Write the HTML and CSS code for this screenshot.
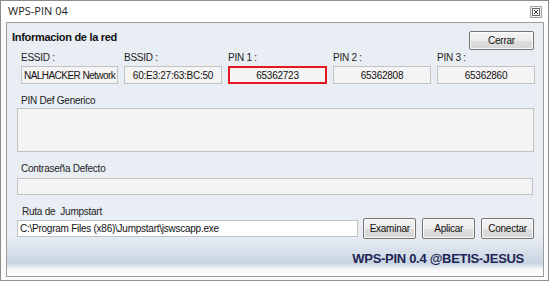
FILE: index.html
```html
<!DOCTYPE html>
<html lang="es">
<head>
    <meta charset="UTF-8">
    <link rel="stylesheet" href="styles.css">
    <title>WPS-PIN 04</title>
</head>
<body>
    <div class="ventana">
        <div class="titulo">
            <span class="tituloTexto">WPS-PIN 04</span>
            <span class="cerrarX">
                <svg width="8" height="8" viewBox="0 0 8 8">
                    <rect x="0.5" y="0.5" width="7" height="7" fill="none" stroke="#6a6a6a" stroke-width="1"/>
                    <path d="M2 2 L6 6 M6 2 L2 6" stroke="#4a4a4a" stroke-width="1"/>
                </svg>
            </span>
        </div>
        <div class="panel">
            <div class="cabecera">
                <h1>Informacion de la red</h1>
                <button class="boton cerrar">Cerrar</button>
            </div>

            <div class="campos">
                <div class="campo">
                    <label>ESSID :</label>
                    <div class="caja izq">NALHACKER Network</div>
                </div>
                <div class="campo">
                    <label>BSSID :</label>
                    <div class="caja">60:E3:27:63:BC:50</div>
                </div>
                <div class="campo">
                    <label>PIN 1 :</label>
                    <div class="caja marcada">65362723</div>
                </div>
                <div class="campo">
                    <label>PIN 2 :</label>
                    <div class="caja">65362808</div>
                </div>
                <div class="campo">
                    <label>PIN 3 :</label>
                    <div class="caja">65362860</div>
                </div>
            </div>

            <label class="etiqueta">PIN Def Generico</label>
            <div class="caja area"></div>

            <label class="etiqueta">Contraseña Defecto</label>
            <div class="caja larga"></div>

            <label class="etiqueta ruta">Ruta de &nbsp;Jumpstart</label>
            <div class="filaRuta">
                <div class="caja camino">C:\Program Files (x86)\Jumpstart\jswscapp.exe</div>
                <button class="boton">Examinar</button>
                <button class="boton">Aplicar</button>
                <button class="boton">Conectar</button>
            </div>

            <div class="firma">WPS-PIN 0.4 @BETIS-JESUS</div>
        </div>
    </div>
</body>
</html>
```

FILE: styles.css
```css
*{
    box-sizing: border-box;
}
body{
    margin: 0;
    background: #ffffff;
    font-family: "Liberation Sans", Arial, sans-serif;
    font-size: 10px;
    letter-spacing: -0.25px;
    color: #1a1a1a;
}

.ventana{
    width: 549px;
    height: 281px;
    border: 1px solid #8c8c8c;
    background: #fbfbfb;
    display: flex;
    flex-direction: column;
}
.titulo{
    height: 21px;
    display: flex;
    align-items: center;
    justify-content: space-between;
    padding: 0 6px 2px 7px;
    background: #ffffff;
}
.tituloTexto{
    font-family: "Open Sans", sans-serif;
    font-size: 11px;
    letter-spacing: 0;
    color: #222;
}
.cerrarX{
    width: 12px;
    height: 12px;
    border: 1px solid #a0a0a0;
    background: #f4f4f4;
    display: flex;
    align-items: center;
    justify-content: center;
    margin-top: 3px;
}

.panel{
    margin: 0 4px 0 5px;
    height: 255px;
    border: 1px solid #9c9c9c;
    padding: 0 9px 0 5px;
    display: flex;
    flex-direction: column;
    background: linear-gradient(to bottom, #e9eef4 0%, #e9eef4 84%, #cad5e3 95%, #f6f8fa 97.5%, #ffffff 100%);
}

.cabecera{
    display: flex;
    justify-content: space-between;
    align-items: flex-start;
    margin-top: 8px;
}
h1{
    margin: 0;
    font-size: 11px;
    line-height: 13px;
    letter-spacing: -0.3px;
    font-weight: bold;
    color: #111;
}

.boton{
    font-family: "Liberation Sans", Arial, sans-serif;
    font-size: 10px;
    letter-spacing: -0.25px;
    color: #111;
    height: 21px;
    width: 53px;
    padding: 0;
    border: 1px solid #747474;
    border-radius: 2px;
    background: linear-gradient(to bottom, #f4f4f4 0%, #ececec 50%, #dedede 51%, #d6d6d6 100%);
    box-shadow: inset 0 0 0 1px #fbfbfb;
}
.cerrar{
    width: 65px;
    height: 19px;
}

.campos{
    display: grid;
    grid-template-columns: 97px 98px 99px 98px 98px;
    column-gap: 6px;
    margin-left: 9px;
}
.campo{
    display: flex;
    flex-direction: column;
}
.campo label{
    line-height: 12px;
    margin-top: 2px;
    margin-bottom: 2px;
    color: #222;
}

.caja{
    height: 18px;
    border: 1px solid #c2c2c2;
    background: #f4f4f4;
    display: flex;
    align-items: center;
    justify-content: center;
    white-space: nowrap;
    overflow: hidden;
    color: #111;
}
.izq{
    justify-content: flex-start;
    padding-left: 2px;
    letter-spacing: -0.55px;
}
.marcada{
    border: 2px solid #e3161c;
}

.etiqueta{
    display: block;
    line-height: 12px;
    margin: 11px 0 0 9px;
    color: #222;
}
.area{
    height: 44px;
    margin: 1px 0 0 5px;
    width: 517px;
}
.larga{
    height: 17px;
    margin: 3px 0 0 5px;
    width: 516px;
}
.ruta{
    margin-left: 10px;
}

.filaRuta{
    display: flex;
    align-items: center;
    gap: 6px;
    margin: 0 0 0 5px;
}
.camino{
    width: 342px;
    height: 17px;
    background: #ffffff;
    justify-content: flex-start;
    padding-left: 2px;
    margin-right: -1px;
}

.firma{
    margin-top: 12px;
    align-self: flex-end;
    margin-right: 10px;
    font-size: 13px;
    font-weight: bold;
    letter-spacing: -0.3px;
    color: #1c2553;
}
```
